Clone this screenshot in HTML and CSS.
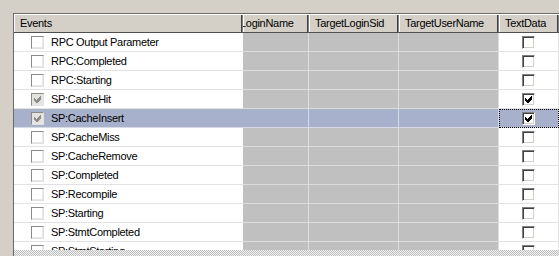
FILE: index.html
```html
<!DOCTYPE html>
<html lang="en">
  <head>
    <meta charset="UTF-8" />
    <title>Trace Events</title>
    <link rel="stylesheet" href="styles.css">
  </head>
  <body>
    <div class="grid">
      <div class="row head">
        <div class="hcell">Events</div>
        <div class="hcell clip"><span>LoginName</span></div>
        <div class="hcell">TargetLoginSid</div>
        <div class="hcell">TargetUserName</div>
        <div class="hcell">TextData</div>
      </div>

      <div class="row">
        <div class="cell ev"><span class="cb"></span>RPC Output Parameter</div>
        <div class="cell off"></div><div class="cell off"></div><div class="cell off"></div>
        <div class="cell td"><span class="cb"></span></div>
      </div>
      <div class="row">
        <div class="cell ev"><span class="cb"></span>RPC:Completed</div>
        <div class="cell off"></div><div class="cell off"></div><div class="cell off"></div>
        <div class="cell td"><span class="cb"></span></div>
      </div>
      <div class="row">
        <div class="cell ev"><span class="cb"></span>RPC:Starting</div>
        <div class="cell off"></div><div class="cell off"></div><div class="cell off"></div>
        <div class="cell td"><span class="cb"></span></div>
      </div>
      <div class="row">
        <div class="cell ev"><span class="cb dis"><svg viewBox="0 0 7 7"><path d="M0 2l2 2 4-4h1v3l-4 4h-1l-2-2z" /></svg></span>SP:CacheHit</div>
        <div class="cell off"></div><div class="cell off"></div><div class="cell off"></div>
        <div class="cell td"><span class="cb"><svg viewBox="0 0 7 7"><path d="M0 2l2 2 4-4h1v3l-4 4h-1l-2-2z" /></svg></span></div>
      </div>
      <div class="row sel">
        <div class="cell ev"><span class="cb dis"><svg viewBox="0 0 7 7"><path d="M0 2l2 2 4-4h1v3l-4 4h-1l-2-2z" /></svg></span>SP:CacheInsert</div>
        <div class="cell off"></div><div class="cell off"></div><div class="cell off"></div>
        <div class="cell td focus"><span class="cb"><svg viewBox="0 0 7 7"><path d="M0 2l2 2 4-4h1v3l-4 4h-1l-2-2z" /></svg></span></div>
      </div>
      <div class="row">
        <div class="cell ev"><span class="cb"></span>SP:CacheMiss</div>
        <div class="cell off"></div><div class="cell off"></div><div class="cell off"></div>
        <div class="cell td"><span class="cb"></span></div>
      </div>
      <div class="row">
        <div class="cell ev"><span class="cb"></span>SP:CacheRemove</div>
        <div class="cell off"></div><div class="cell off"></div><div class="cell off"></div>
        <div class="cell td"><span class="cb"></span></div>
      </div>
      <div class="row">
        <div class="cell ev"><span class="cb"></span>SP:Completed</div>
        <div class="cell off"></div><div class="cell off"></div><div class="cell off"></div>
        <div class="cell td"><span class="cb"></span></div>
      </div>
      <div class="row">
        <div class="cell ev"><span class="cb"></span>SP:Recompile</div>
        <div class="cell off"></div><div class="cell off"></div><div class="cell off"></div>
        <div class="cell td"><span class="cb"></span></div>
      </div>
      <div class="row">
        <div class="cell ev"><span class="cb"></span>SP:Starting</div>
        <div class="cell off"></div><div class="cell off"></div><div class="cell off"></div>
        <div class="cell td"><span class="cb"></span></div>
      </div>
      <div class="row">
        <div class="cell ev"><span class="cb"></span>SP:StmtCompleted</div>
        <div class="cell off"></div><div class="cell off"></div><div class="cell off"></div>
        <div class="cell td"><span class="cb"></span></div>
      </div>
      <div class="row">
        <div class="cell ev"><span class="cb"></span>SP:StmtStarting</div>
        <div class="cell off"></div><div class="cell off"></div><div class="cell off"></div>
        <div class="cell td"><span class="cb"></span></div>
      </div>

      <div class="dither"></div>
    </div>
  </body>
</html>
```
FILE: styles.css
```css
body {
  margin: 0;
  width: 559px;
  height: 256px;
  overflow: hidden;
  background: #d4d0c8;
  font-family: "Liberation Sans", Arial, sans-serif;
  font-size: 11px;
  letter-spacing: -0.3px;
  color: #000;
}
.grid {
  position: relative;
  margin: 13px 0 0 13px;
  border-left: 1px solid #6a6a6a;
  border-top: 1px solid #6a6a6a;
  background: #fff;
  height: 260px;
}
.row {
  display: grid;
  grid-template-columns: 229px 66px 90px 100px 60px;
  height: 19px;
}
.head {
  background: #d4d0c8;
}
.hcell {
  height: 18px;
  line-height: 19px;
  padding-left: 6px;
  border-bottom: 1px solid #505050;
  box-shadow: inset 1px 1px 0 #fff, inset -1px 0 0 #808080, inset -2px 0 0 #404040;
  white-space: nowrap;
  overflow: hidden;
}
.hcell.clip {
  padding-left: 0;
}
.hcell.clip span {
  margin-left: -3px;
}
.cell {
  height: 18px;
  border-bottom: 1px solid #e2e2e2;
  display: flex;
  align-items: center;
  white-space: nowrap;
}
.ev {
  padding-left: 17px;
  gap: 7px;
}
.off {
  background: #c0c0c0;
  border-right: 1px solid #dedede;
  border-bottom-color: #dcdcdc;
}
.td {
  justify-content: center;
  border-right: 1px solid #e2e2e2;
}
.sel .cell {
  background: #a8b1cb;
  border-bottom-color: #d6dae6;
}
.sel .off {
  border-right-color: #d6dae6;
}
.focus {
  outline: 1px dotted #000;
  outline-offset: -1px;
}
.cb {
  box-sizing: border-box;
  width: 13px;
  height: 13px;
  background: #fff;
  border: 1px solid;
  border-color: #808080 #fff #fff #808080;
  box-shadow: inset 1px 1px 0 #404040, inset -1px -1px 0 #d4d0c8;
  display: flex;
  align-items: center;
  justify-content: center;
  flex: none;
}
.ev .cb {
  box-shadow: inset -1px -1px 0 #e8e8e8;
  border-color: #8a8a8a #e0e0e0 #e0e0e0 #8a8a8a;
}
.cb svg {
  width: 7px;
  height: 7px;
  fill: #000;
  shape-rendering: crispEdges;
}
.cb.dis {
  background: #e4e2dc;
}
.cb.dis svg {
  fill: #8c8c8c;
}
.dither {
  position: absolute;
  left: 0;
  top: 236px;
  width: 546px;
  height: 7px;
  background: repeating-conic-gradient(#f4f4f4 0 25%, #bdbdbd 0 50%) 0 0 / 2px 2px;
}
```
